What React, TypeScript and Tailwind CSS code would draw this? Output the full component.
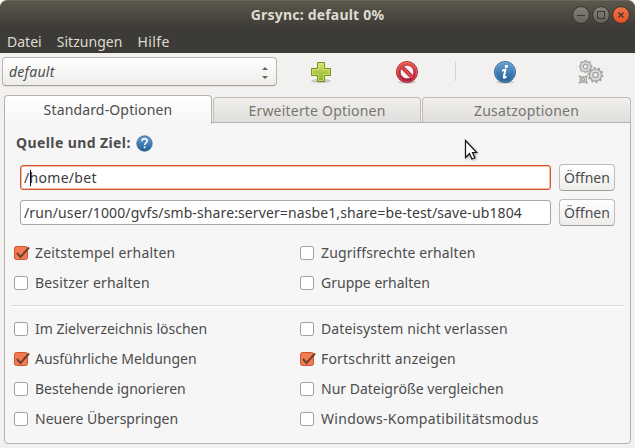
import type { ReactNode } from "react";

function TitleBar() {
  return (
    <header className="relative flex h-[29px] shrink-0 items-center justify-center rounded-t-[7px] border-t border-[#6b675a] bg-linear-to-b from-[#5b574b] to-[#3d3b37]">
      <h1 className="text-[14px] leading-5 font-bold tracking-[0.2px] text-[#dfdbd2]">Grsync: default 0%</h1>
      <svg className="absolute top-[4px] right-[4px]" width="60" height="20" viewBox="0 0 60 20">
        <defs>
          <linearGradient id="grey" x2="0" y2="1">
            <stop stopColor="#85827a" />
            <stop offset="1" stopColor="#63615b" />
          </linearGradient>
          <linearGradient id="close" x2="0" y2="1">
            <stop stopColor="#f4744b" />
            <stop offset="1" stopColor="#e4501f" />
          </linearGradient>
        </defs>
        <g stroke="#32312c">
          <circle cx="10" cy="10" r="8.4" fill="url(#grey)" />
          <circle cx="30" cy="10" r="8.4" fill="url(#grey)" />
          <circle cx="50" cy="10" r="8.4" fill="url(#close)" />
        </g>
        <g fill="none" stroke="#3b3a35" strokeWidth="1">
          <path d="M6 10.5h8" />
          <rect x="26.5" y="6.5" width="7" height="7" />
          <path d="m47.5 7.500 5 5m0-5-5 5" strokeWidth="1.4" />
        </g>
      </svg>
    </header>
  );
}

function AddIcon() {
  return (
    <svg width="24" height="24" viewBox="0 0 24 24">
      <defs>
        <linearGradient id="add" x2="0" y2="1">
          <stop stopColor="#d3e66c" />
          <stop offset="1" stopColor="#8dac1c" />
        </linearGradient>
      </defs>
      <ellipse cx="12" cy="21" rx="10" ry="2.2" fill="#000" opacity=".16" />
      <path d="M8.500 2.500h7v6h6v7h-6v6h-7v-6h-6v-7h6z" fill="url(#add)" stroke="#6b9315" />
      <path d="M9.500 3.500h5v6h6v5h-6v6h-5v-6h-6v-5h6z" fill="none" stroke="#dcea8c" opacity=".65" />
    </svg>
  );
}

function StopIcon() {
  return (
    <svg width="24" height="24" viewBox="0 0 24 24">
      <defs>
        <linearGradient id="stop" x2="0" y2="1">
          <stop stopColor="#ee5a4a" />
          <stop offset="1" stopColor="#a90f35" />
        </linearGradient>
      </defs>
      <ellipse cx="12" cy="22" rx="9" ry="1.8" fill="#000" opacity=".15" />
      <circle cx="12" cy="12" r="10.6" fill="url(#stop)" stroke="#aa2034" strokeWidth=".8" />
      <circle cx="12" cy="12" r="9.6" fill="none" stroke="#f29a8e" strokeWidth=".7" opacity=".6" />
      <circle cx="12" cy="12" r="6.8" fill="#f5f1f0" stroke="#a8283a" strokeWidth=".7" />
      <path d="m7 7 10 10" stroke="#b52636" strokeWidth="4" />
      <path d="m6.500 6.500 11 11" stroke="#d94848" strokeWidth="2.600" />
    </svg>
  );
}

function InfoIcon() {
  return (
    <svg width="24" height="24" viewBox="0 0 24 24">
      <defs>
        <linearGradient id="info" x2="0" y2="1">
          <stop stopColor="#6ba0d4" />
          <stop offset="1" stopColor="#205e96" />
        </linearGradient>
      </defs>
      <ellipse cx="12" cy="22" rx="9" ry="1.8" fill="#000" opacity=".15" />
      <circle cx="12" cy="12" r="10.6" fill="url(#info)" stroke="#2b5f92" strokeWidth=".8" />
      <circle cx="12" cy="12" r="9.6" fill="none" stroke="#9bc4e8" strokeWidth=".6" opacity=".5" />
      <circle cx="13.4" cy="6.4" r="1.6" fill="#fff" />
      <path d="M9 10.600c1.500-.1 2.600-.5 3.500-1L10.800 17c-.2 1.200.8 1 2.700-.5" fill="none" stroke="#fff" strokeWidth="2" strokeLinejoin="round" />
    </svg>
  );
}

function GearsIcon() {
  return (
    <svg width="26" height="26" viewBox="0 0 26 26" fill="#dcdbd9" stroke="#a3a2a0">
      <g strokeWidth="1.2">
        <path d="m7.500 1.500 2 1.700 2.600-.2.2 2.700L14 7.500l-1.700 2-.2 2.500-2.700.1-1.900 1.400-2-1.500-2.600-.1-.1-2.500L1.500 7.500l1.400-1.900.1-2.500 2.600.1z" />
        <circle cx="7.500" cy="7.500" r="2.300" fill="#f0efed" />
        <path d="m1.500 17 2.300.8h3L9 17l-.7 2.400v2.400L9 24l-2.200-.8h-3L1.500 24l.8-2.200v-2.500z" />
        <circle cx="5.200" cy="20.500" r="1.300" fill="#f0efed" />
      </g>
      <circle cx="17.500" cy="16" r="7" fill="none" strokeWidth="2" strokeDasharray="2.200 2.200" />
      <circle cx="17.500" cy="16" r="6" strokeWidth="1.200" />
      <circle cx="17.500" cy="16" r="2.600" fill="#f0efed" strokeWidth="1.300" />
    </svg>
  );
}

function HelpIcon() {
  return (
    <svg width="17" height="17" viewBox="0 0 17 17">
      <circle cx="8.500" cy="8.500" r="7.700" fill="url(#info)" stroke="#2b5f92" strokeWidth=".8" />
      <path d="M5.900 6.300c0-3.600 5.300-3.300 5.300-.3 0 1.900-2.600 2-2.600 4.300" fill="none" stroke="#fff" strokeWidth="1.500" />
      <rect x="7.800" y="11.500" width="1.700" height="1.700" fill="#fff" />
    </svg>
  );
}

function Toolbar() {
  return (
    <div className="flex h-[42px] shrink-0 items-start pt-1 pl-[2px]">
      <button className="flex h-[29px] w-[275px] items-center justify-between rounded-[4px] border border-[#b9b6b0] border-b-[#a19e98] bg-linear-to-b from-white to-[#eeedeb] pr-[7px] pl-[6px] shadow-[0_1px_0_#e4e3e1]">
        <span className="text-[14px] leading-5 tracking-[0.25px] italic">default</span>
        <svg width="8" height="14" viewBox="0 0 8 14" fill="#65635f" className="mt-[2px]">
          <path d="m1 4 3-3 3 3zM1 10l3 3 3-3z" />
        </svg>
      </button>
      <button className="mt-[3px] ml-[32px]"><AddIcon /></button>
      <button className="mt-[3px] ml-[62px]"><StopIcon /></button>
      <div className="mt-[4px] ml-[36px] h-5 w-px bg-[#d5d3d0]" />
      <button className="mt-[3px] ml-[37px]"><InfoIcon /></button>
      <button className="mt-[2px] ml-[61px]"><GearsIcon /></button>
    </div>
  );
}

function Check({ children, checked = false, spacing = "" }: { children: ReactNode; checked?: boolean; spacing?: string }) {
  return (
    <label className="flex h-[30px] items-center">
      <svg className="mr-[6px] shrink-0 overflow-visible" width="16" height="16" viewBox="0 0 16 16">
        <rect x="1.500" y="1.500" width="13" height="13" rx="2" fill={checked ? "#f37b51" : "#fff"} stroke={checked ? "#ce552c" : "#a19e99"} />
        {checked && <path d="m4 8 3.500 4L16 2.500" fill="none" stroke="#70402f" strokeWidth="2" />}
      </svg>
      <span className={`whitespace-nowrap ${spacing}`}>{children}</span>
    </label>
  );
}

function PathRow({ children, focused = false }: { children: ReactNode; focused?: boolean }) {
  return (
    <div className="flex h-[35px] items-center gap-2">
      <div className={`flex h-[25px] w-[531px] items-center rounded-[3px] border bg-white pl-[3px] text-[#3c3c3c] ${focused ? "border-[#d6552a] tracking-[0.3px] shadow-[inset_0_0_0_0.5px_#e37b57]" : "border-[#a9a6a1] tracking-[0.11px]"}`}>
        <span className="whitespace-nowrap">{children}</span>
      </div>
      <button className="flex h-[27px] w-[56px] items-center justify-center rounded-[4px] border border-[#c0bdb8] border-b-[#a19e98] bg-linear-to-b from-white to-[#eeedeb]">
        <span>Öffnen</span>
      </button>
    </div>
  );
}

export default function App() {
  return (
    <div className="relative flex h-[448px] w-[635px] flex-col overflow-hidden bg-white font-['Noto_Sans',sans-serif] text-[14px] leading-5 text-[#4c4c4c]">
      <TitleBar />
      <nav className="flex h-[24px] shrink-0 items-center gap-[15px] bg-[#3c3b37] pt-px pl-[7px] text-[#dfdbd2]">
        <span>Datei</span>
        <span className="tracking-[0.05px]">Sitzungen</span>
        <span className="tracking-[0.4px]">Hilfe</span>
      </nav>
      <div className="flex grow flex-col bg-[#f2f1f0]">
        <Toolbar />
        <div className="ml-[4px] flex h-[28px] w-[627px] shrink-0 items-end">
          <div className="z-10 -mb-px flex h-[29px] w-[208px] items-center justify-center rounded-t-[4px] border border-b-0 border-[#b5b2ad] bg-linear-to-b from-white to-[#f6f6f6] tracking-[0.15px]">
            Standard-Optionen
          </div>
          <div className="ml-px flex h-[26px] w-[208px] items-center justify-center rounded-t-[4px] border border-b-0 border-[#c0bdb8] bg-linear-to-b from-[#f0efed] to-[#dfdedb] pt-px tracking-[0.2px] text-[#77756f]">
            Erweiterte Optionen
          </div>
          <div className="ml-px flex h-[26px] w-[209px] items-center justify-center rounded-t-[4px] border border-b-0 border-[#c0bdb8] bg-linear-to-b from-[#f0efed] to-[#dfdedb] pt-px tracking-[0.2px] text-[#77756f]">
            Zusatzoptionen
          </div>
        </div>
        <main className="-mt-px ml-[4px] h-[322px] w-[627px] shrink-0 rounded-b-[4px] border border-[#b5b2ad] bg-[#f6f6f6] pt-[9px]">
          <div className="flex h-[22px] items-center gap-[5px] pl-[11px] font-bold">
            <span className="tracking-[0.4px]">Quelle und Ziel:</span>
            <HelpIcon />
          </div>
          <div className="mt-[6px] pl-[15px]">
            <PathRow focused>
              <span className="relative">/<i className="absolute top-[2px] right-[-1px] h-4 w-px bg-black" /></span>home/bet
            </PathRow>
            <PathRow>/run/user/1000/gvfs/smb-share:server=nasbe1,share=be-test/save-ub1804</PathRow>
          </div>
          <div className="mt-[8px] grid grid-cols-[286px_1fr] pl-[8px]">
            <Check checked spacing="tracking-[0.2px]">Zeitstempel erhalten</Check>
            <Check spacing="tracking-[0.12px]">Zugriffsrechte erhalten</Check>
            <Check spacing="tracking-[0.18px]">Besitzer erhalten</Check>
            <Check>Gruppe erhalten</Check>
          </div>
          <div className="mx-[6px] mt-[7px] h-[2px] border-t border-[#d9d8d6] bg-white" />
          <div className="mt-[7px] grid grid-cols-[286px_1fr] pl-[8px]">
            <Check>Im Zielverzeichnis löschen</Check>
            <Check spacing="tracking-[0.12px]">Dateisystem nicht verlassen</Check>
            <Check checked>Ausführliche Meldungen</Check>
            <Check checked spacing="tracking-[0.17px]">Fortschritt anzeigen</Check>
            <Check>Bestehende ignorieren</Check>
            <Check>Nur Dateigröße vergleichen</Check>
            <Check>Neuere Überspringen</Check>
            <Check spacing="tracking-[0.3px]">Windows-Kompatibilitätsmodus</Check>
          </div>
        </main>
      </div>
      <svg className="absolute top-[139px] left-[464px] z-20 drop-shadow-[1px_1px_1px_#0005]" width="14" height="22" viewBox="0 0 14 22">
        <path d="M1.500 1.500v17l4-4 2.400 5.500 3-1.300L8.500 13.500h4.300z" fill="#fff" stroke="#111" strokeWidth="1.200" />
      </svg>
    </div>
  );
}
